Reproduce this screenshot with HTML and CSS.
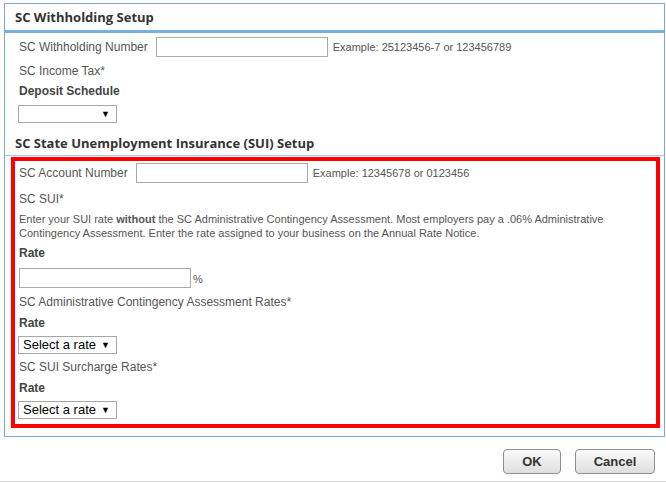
FILE: index.html
```html
<!DOCTYPE html>
<html lang="en">
<head>
    <meta charset="UTF-8">
    <title>SC Tax Setup</title>
    <link rel="stylesheet" href="styles.css">
</head>
<body>
    <div class="panel">
        <h3 class="section-title first">SC Withholding Setup</h3>
        <div class="fields">
            <div class="row">
                <label for="whNumber">SC Withholding Number</label>
                <input type="text" id="whNumber" class="text-input">
                <span class="example">Example: 25123456-7 or 123456789</span>
            </div>
            <div class="line gap7">SC Income Tax*</div>
            <div class="line strong gap6">Deposit Schedule</div>
            <div class="select-wrap gap7">
                <select class="select">
                    <option></option>
                </select>
            </div>
        </div>

        <h3 class="section-title second">SC State Unemployment Insurance (SUI) Setup</h3>
        <div class="highlight">
            <div class="row">
                <label for="acctNumber">SC Account Number</label>
                <input type="text" id="acctNumber" class="text-input">
                <span class="example">Example: 12345678 or 0123456</span>
            </div>
            <div class="line gap9">SC SUI*</div>
            <p class="note">Enter your SUI rate <b>without</b> the SC Administrative Contingency Assessment. Most employers pay a .06% Administrative Contingency Assessment. Enter the rate assigned to your business on the Annual Rate Notice.</p>
            <div class="line strong gap6">Rate</div>
            <div class="row gap8">
                <input type="text" class="text-input">
                <span class="pct">%</span>
            </div>
            <div class="line gap7">SC Administrative Contingency Assessment Rates*</div>
            <div class="line strong gap7">Rate</div>
            <div class="select-wrap gap6">
                <select class="select">
                    <option>Select a rate</option>
                </select>
            </div>
            <div class="line gap6">SC SUI Surcharge Rates*</div>
            <div class="line strong gap7">Rate</div>
            <div class="select-wrap gap6">
                <select class="select">
                    <option>Select a rate</option>
                </select>
            </div>
        </div>
    </div>

    <div class="buttons">
        <button type="button" class="btn ok">OK</button>
        <button type="button" class="btn cancel">Cancel</button>
    </div>
</body>
</html>
```

FILE: styles.css
```css
body {
    margin: 0;
    height: 481px;
    border-bottom: 1px solid #d6d6d6;
    font-family: "Liberation Sans", Arial, sans-serif;
    font-size: 12px;
    color: #555;
    background-color: #fff;
}
.panel {
    margin: 3px 1px 0 4px;
    padding-bottom: 8px;
    border: 1px solid #7ea7d3;
}
.section-title {
    margin: 0;
    padding-left: 10px;
    font-family: "Open Sans", sans-serif;
    font-size: 13px;
    font-weight: 700;
    color: #333;
}
.section-title.first {
    height: 26px;
    line-height: 26px;
    border-bottom: 3px solid #7aade0;
}
.section-title.second {
    padding-top: 11px;
    padding-bottom: 3px;
    line-height: 18px;
    border-bottom: 1px solid #a9c6e6;
}
.fields {
    padding: 4px 14px 0 14px;
}
.highlight {
    margin: 1px 4px 0 6px;
    padding: 2px 4px 5px 4px;
    border: 4px solid #f00;
}
.row {
    display: flex;
    align-items: center;
    height: 20px;
}
.row label {
    margin-right: 8px;
}
.text-input {
    width: 172px;
    height: 20px;
    margin: 0;
    padding: 0 3px;
    border: 1px solid #a9a9a9;
    box-sizing: border-box;
    font: inherit;
}
.example {
    margin-left: 5px;
    font-size: 11px;
}
.pct {
    margin-left: 2px;
    font-size: 11px;
    padding-top: 2px;
}
.line {
    line-height: 14px;
}
.strong {
    font-weight: bold;
    color: #444;
}
.note {
    margin: 6px 0 0 0;
    font-size: 11px;
    line-height: 14px;
}
.gap6 { margin-top: 6px; }
.gap7 { margin-top: 7px; }
.gap8 { margin-top: 8px; }
.gap9 { margin-top: 9px; }

.select-wrap {
    position: relative;
    width: 99px;
    height: 18px;
    margin-left: -1px;
}
.select {
    -webkit-appearance: none;
    appearance: none;
    width: 99px;
    height: 18px;
    margin: 0;
    padding: 0 0 0 4px;
    border: 1px solid #a6a6a6;
    border-radius: 0;
    background-color: #fff;
    font-family: "Liberation Sans", Arial, sans-serif;
    font-size: 13px;
    color: #000;
    line-height: 16px;
}
.select-wrap::after {
    content: "\25BC";
    position: absolute;
    right: 7px;
    top: 4px;
    font-size: 9px;
    line-height: 10px;
    color: #000;
    pointer-events: none;
}
.buttons {
    display: flex;
    justify-content: flex-end;
    gap: 14px;
    margin-top: 12px;
    padding-right: 11px;
}
.btn {
    height: 25px;
    padding: 0;
    border: 1px solid #8f8f8f;
    border-radius: 4px;
    background: linear-gradient(#fbfbfb, #dedede);
    font-family: "Liberation Sans", Arial, sans-serif;
    font-size: 13px;
    font-weight: bold;
    color: #333;
    cursor: pointer;
}
.btn.ok {
    width: 58px;
}
.btn.cancel {
    width: 80px;
}
```
